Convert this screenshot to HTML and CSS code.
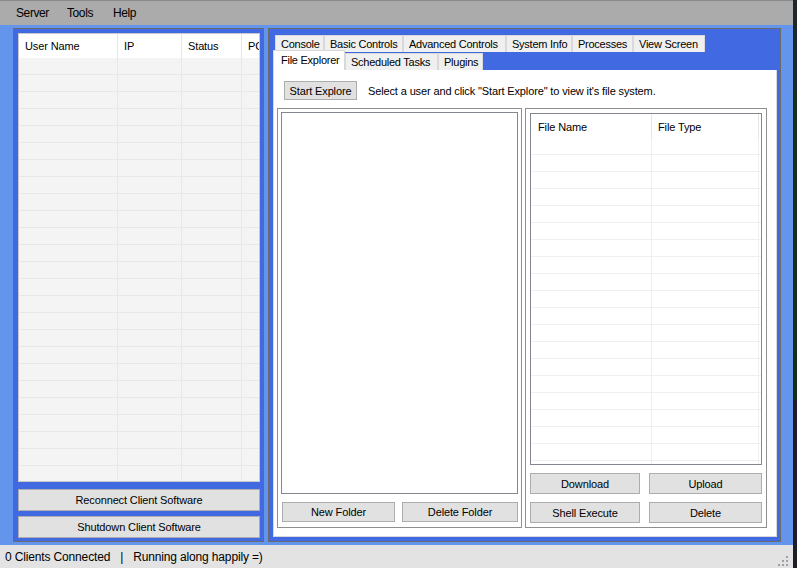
FILE: index.html
```html
<!DOCTYPE html>
<html>
<head>
<meta charset="utf-8">
<link rel="stylesheet" href="styles.css">
</head>
<body>
<div class="screen">
  <div class="window">
    <div class="menubar">
      <span class="menu-item m-server">Server</span>
      <span class="menu-item m-tools">Tools</span>
      <span class="menu-item m-help">Help</span>
    </div>
    <div class="main">
      <div class="panel panel-left">
        <div class="listview users">
          <div class="lv-head">
            <div class="col u1">User Name</div>
            <div class="col u2">IP</div>
            <div class="col u3">Status</div>
            <div class="col u4">PC</div>
          </div>
          <div class="lv-body users-body"></div>
        </div>
        <div class="btn btn-wide btn-first">Reconnect Client Software</div>
        <div class="btn btn-wide btn-second">Shutdown Client Software</div>
      </div>
      <div class="panel panel-right">
        <div class="tabrow row1">
          <div class="tab t-console">Console</div>
          <div class="tab t-basic">Basic Controls</div>
          <div class="tab t-adv">Advanced Controls</div>
          <div class="tab t-sys">System Info</div>
          <div class="tab t-proc">Processes</div>
          <div class="tab t-view">View Screen</div>
        </div>
        <div class="tabrow row2">
          <div class="tab tab-active t-file">File Explorer</div>
          <div class="tab t-sched">Scheduled Tasks</div>
          <div class="tab t-plug">Plugins</div>
        </div>
        <div class="tabpage">
          <div class="toolbar">
            <div class="btn btn-start">Start Explore</div>
            <span class="hint">Select a user and click "Start Explore" to view it's file system.</span>
          </div>
          <div class="groups">
            <div class="group group-left">
              <div class="tree"></div>
              <div class="btnrow">
                <div class="btn btn-newf">New Folder</div>
                <div class="btn btn-delf">Delete Folder</div>
              </div>
            </div>
            <div class="group group-right">
              <div class="listview files">
                <div class="lv-head">
                  <div class="col f1">File Name</div>
                  <div class="col f2">File Type</div>
                </div>
                <div class="lv-body files-body"></div>
              </div>
              <div class="btngrid">
                <div class="btn">Download</div>
                <div class="btn">Upload</div>
                <div class="btn">Shell Execute</div>
                <div class="btn">Delete</div>
              </div>
            </div>
          </div>
        </div>
      </div>
    </div>
    <div class="statusbar">
      <span class="st-text">0 Clients Connected</span>
      <span class="st-sep">|</span>
      <span class="st-text">Running along happily =)</span>
      <svg class="grip" width="12" height="12" viewBox="0 0 12 12">
        <rect x="9" y="1" width="2" height="2" fill="#a0a0a0"/>
        <rect x="5" y="5" width="2" height="2" fill="#a0a0a0"/>
        <rect x="9" y="5" width="2" height="2" fill="#a0a0a0"/>
        <rect x="1" y="9" width="2" height="2" fill="#a0a0a0"/>
        <rect x="5" y="9" width="2" height="2" fill="#a0a0a0"/>
        <rect x="9" y="9" width="2" height="2" fill="#a0a0a0"/>
      </svg>
    </div>
  </div>
  <div class="desk"></div>
</div>
</body>
</html>
```
FILE: styles.css
```css
* { box-sizing: border-box; }
html, body { margin: 0; padding: 0; }
body {
  width: 797px;
  height: 568px;
  overflow: hidden;
  font-family: "Liberation Sans", Arial, sans-serif;
  font-size: 11px;
  letter-spacing: -0.13px;
  color: #000;
}
.screen {
  display: flex;
  width: 797px;
  height: 568px;
}
.window {
  width: 793px;
  height: 568px;
  display: flex;
  flex-direction: column;
}
.desk {
  width: 4px;
  height: 568px;
  background: linear-gradient(to bottom, #1c2730 0, #1c2730 90px, #16301c 90px, #123018 400px, #1e1e2a 400px);
}

/* menu */
.menubar {
  height: 25px;
  background: #ababab;
  border-top: 1px solid #8a8a8a;
  display: flex;
  align-items: center;
  padding-left: 16px;
  font-size: 12px;
  letter-spacing: -0.4px;
}
.menu-item { display: inline-block; }
.m-server { width: 51px; }
.m-tools { width: 46px; }

/* main */
.main {
  flex: 1;
  background: #6495ed;
  padding: 3px 12px 3px 13px;
  display: flex;
  gap: 4px;
}
.panel {
  border: 1px solid #6b6b6b;
  background: #4169e1;
}
.panel-left {
  width: 251px;
  padding: 4px 3px 3px 4px;
  display: flex;
  flex-direction: column;
}
.panel-right {
  width: 513px;
  padding: 6px 3px 4px 4px;
  display: flex;
  flex-direction: column;
}

/* list views */
.listview {
  border: 1px solid #c9c9c9;
  display: flex;
  flex-direction: column;
  overflow: hidden;
}
.lv-head {
  height: 24px;
  background: #fff;
  display: flex;
  flex: none;
}
.col {
  height: 24px;
  line-height: 24px;
  padding-left: 6px;
  border-right: 1px solid #e5e5e5;
  white-space: nowrap;
  overflow: hidden;
}
.lv-body { flex: 1; }
.users { flex: 1; background: #f4f4f4; }
.u1 { width: 99px; }
.u2 { width: 64px; }
.u3 { width: 60px; }
.u4 { flex: 1; border-right: none; }
.users-body {
  background:
    linear-gradient(#e8e8e8, #e8e8e8) 98px 0 / 1px 100% no-repeat,
    linear-gradient(#e8e8e8, #e8e8e8) 162px 0 / 1px 100% no-repeat,
    linear-gradient(#e8e8e8, #e8e8e8) 222px 0 / 1px 100% no-repeat,
    repeating-linear-gradient(to bottom, transparent 0, transparent 16px, #e8e8e8 16px, #e8e8e8 17px);
}
.files { height: 352px; border-color: #828790; background: #fff; }
.files .lv-head { height: 24px; }
.files .col { line-height: 26px; }
.f1 { width: 121px; padding-left: 7px; }
.f2 { width: 107px; }
.files-body {
  background:
    linear-gradient(#efefef, #efefef) 120px 0 / 1px 100% no-repeat,
    linear-gradient(#efefef, #efefef) 227px 0 / 1px 100% no-repeat,
    repeating-linear-gradient(to bottom, transparent 0, transparent 16px, #efefef 16px, #efefef 17px);
}

/* buttons */
.btn {
  background: #e1e1e1;
  border: 1px solid #adadad;
  display: flex;
  align-items: center;
  justify-content: center;
  white-space: nowrap;
}
.btn-wide { height: 22px; flex: none; }
.btn-first { margin-top: 7px; }
.btn-second { margin-top: 5px; }

/* tabs */
.tabrow { display: flex; flex: none; }
.row1 { height: 17px; margin-left: 2px; }
.row2 { height: 18px; align-items: flex-end; }
.tab {
  height: 17px;
  background: #f0f0f0;
  border: 1px solid #d9d9d9;
  border-bottom: none;
  padding-left: 5px;
  line-height: 16px;
  white-space: nowrap;
  overflow: hidden;
  letter-spacing: -0.25px;
}
.t-console { width: 49px; }
.t-basic { width: 79px; }
.t-adv { width: 103px; }
.t-sys { width: 66px; }
.t-proc { width: 61px; }
.t-view { width: 72px; }
.tab-active {
  height: 20px;
  background: #fff;
  line-height: 18px;
  padding-left: 7px;
}
.t-file { width: 72px; }
.t-sched { width: 93px; }
.t-plug { width: 45px; }

.tabpage {
  flex: 1;
  background: #fff;
  border: 1px solid #d9d9d9;
  border-top: none;
  width: 504px;
}
.toolbar {
  display: flex;
  align-items: center;
  padding: 11px 0 0 10px;
  height: 30px;
}
.btn-start { width: 73px; height: 19px; }
.hint { margin-left: 11px; }
.groups {
  display: flex;
  gap: 3px;
  padding: 8px 0 0 3px;
}
.group {
  border: 1px solid #8f8f8f;
  height: 420px;
  display: flex;
  flex-direction: column;
}
.group-left { width: 245px; padding: 3px 3px 5px 3px; }
.group-right { width: 242px; padding: 4px 4px 4px 4px; }
.tree {
  height: 382px;
  border: 1px solid #828790;
  background: #fff;
}
.btnrow {
  display: flex;
  gap: 7px;
  margin-top: 8px;
  padding-left: 1px;
}
.btnrow .btn { height: 20px; }
.btn-newf { width: 113px; }
.btn-delf { width: 116px; }
.btngrid {
  display: grid;
  grid-template-columns: 110px 113px;
  grid-auto-rows: 21px;
  column-gap: 9px;
  row-gap: 8px;
  margin-top: 8px;
}

/* status */
.statusbar {
  height: 23px;
  background: #e3e3e3;
  display: flex;
  align-items: center;
  padding-left: 5px;
  font-size: 12px;
  letter-spacing: -0.15px;
  position: relative;
}
.st-sep { margin: 0 10px 0 10px; }
.grip {
  position: absolute;
  right: 4px;
  bottom: 1px;
}
```
